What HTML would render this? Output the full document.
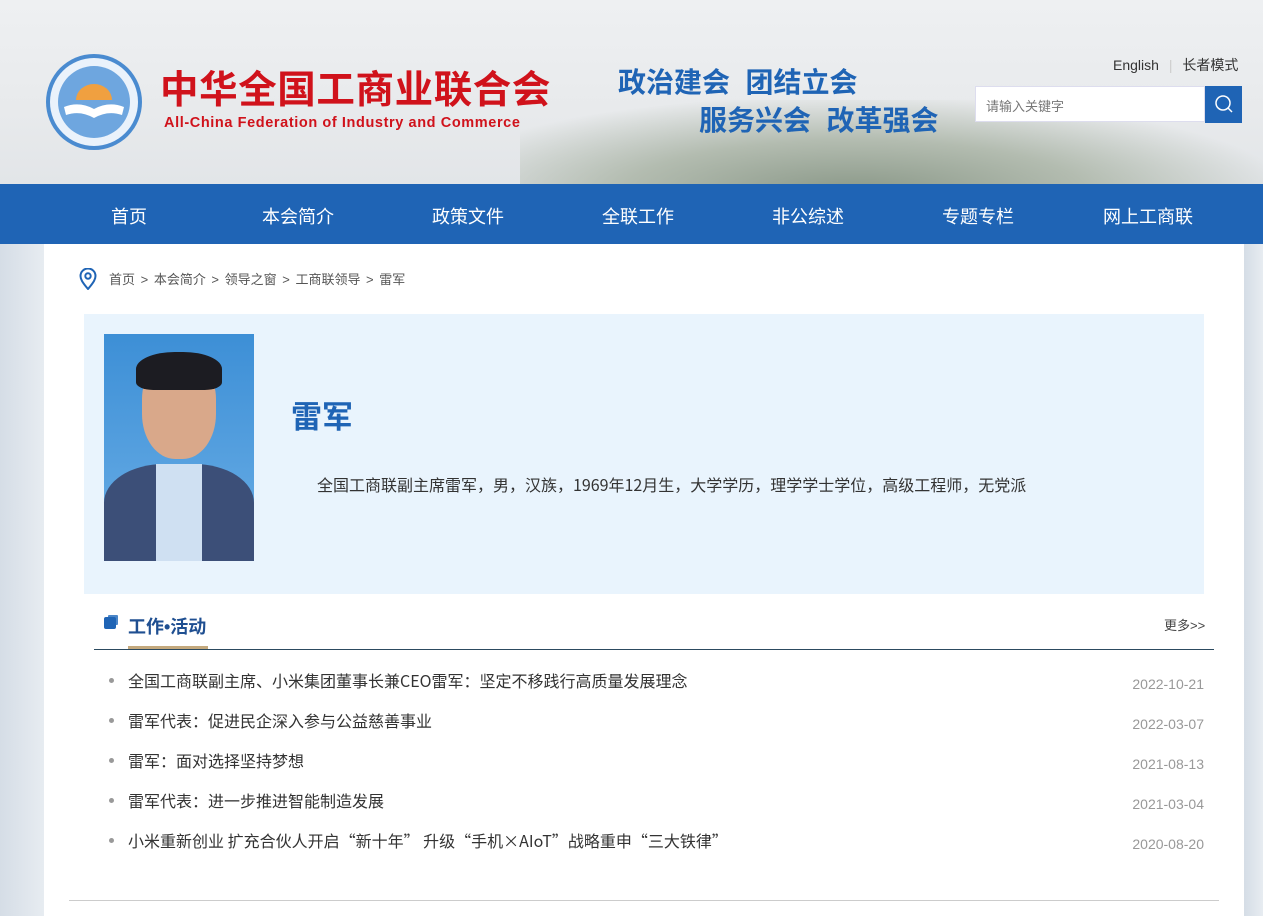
<!DOCTYPE html>
<html><head><meta charset="utf-8"><style>
*{margin:0;padding:0;box-sizing:border-box}
body{width:1263px;height:916px;overflow:hidden;font-family:"Liberation Sans","Noto Sans CJK SC",sans-serif;background:#e3e8ee;position:relative}
.hdr{position:absolute;left:0;top:0;width:1263px;height:184px;background:linear-gradient(180deg,#eef0f2 0%,#e8eaec 60%,#e2e5e8 100%)}
.mtn{position:absolute;left:520px;top:100px;width:743px;height:84px;background:radial-gradient(ellipse at 45% 110%,#8a9888 0%,#b3bcb0 40%,rgba(225,228,230,0) 75%)}
.nav{position:absolute;left:0;top:184px;width:1263px;height:60px;background:#1f64b5}
.nav span{position:absolute;top:19px;color:#fff;font-size:18px}
.main{position:absolute;left:44px;top:244px;width:1200px;height:672px;background:#fff}
.side{position:absolute;top:244px;height:672px;width:44px;background:linear-gradient(90deg,#d5dde6,#e7ecf1)}
.cj{font-family:"Noto Sans CJK SC","Liberation Sans",sans-serif}
.list div{height:40px;position:relative;padding-left:22px}
.list i{position:absolute;left:3px;top:18px;width:5px;height:5px;border-radius:50%;background:#999}
.list b{position:absolute;right:0;top:4px;font-weight:normal;color:#999;font-size:14px;font-family:"Liberation Sans",sans-serif}
</style></head><body>
<div class="hdr"><div class="mtn"></div>
<svg style="position:absolute;left:44px;top:52px" width="100" height="100" viewBox="0 0 100 100"><circle cx="50" cy="50" r="48" fill="#4a8bd0"/><circle cx="50" cy="50" r="44" fill="#eaf2fb"/><circle cx="50" cy="50" r="36" fill="#6ea6df"/><path d="M32 48a18 16 0 0 1 36 0z" fill="#f0a040"/><path d="M20 55q15-6 30 2q15-8 30-2l-2 8q-14-5-28 3q-14-8-28-3z" fill="#fff"/></svg>
<div style="position:absolute;left:160px;top:69px;font-size:38.5px;font-weight:bold;color:#d0121b;line-height:44px;letter-spacing:0.6px">中华全国工商业联合会</div>
<div style="position:absolute;left:164px;top:115px;font-size:14.5px;font-weight:bold;color:#d0121b;letter-spacing:.6px">All-China Federation of Industry and Commerce</div>
<div style="position:absolute;left:618px;top:66px;font-size:28px;font-weight:bold;color:#1f64b5;line-height:34px">政治建会&nbsp;&nbsp;团结立会</div>
<div style="position:absolute;left:699px;top:104px;font-size:28px;font-weight:bold;color:#1f64b5;line-height:34px">服务兴会&nbsp;&nbsp;改革强会</div>
<div style="position:absolute;left:1113px;top:55px;font-size:14px;color:#333">English <span style="color:#ccc;margin:0 6px">|</span> 长者模式</div>
<div style="position:absolute;left:975px;top:86px;width:230px;height:36px;background:#fff;border:1px solid #dde;font-size:13px;color:#777;padding:9px 10px">请输入关键字</div>
<div style="position:absolute;left:1205px;top:86px;width:37px;height:37px;background:#1f64b5"><svg width="37" height="37"><circle cx="18" cy="17" r="7" fill="none" stroke="#fff" stroke-width="1.5"/><path d="M23 22l4 4" stroke="#fff" stroke-width="1.5"/></svg></div>
</div>
<div class="nav"><span style="left:111px">首页</span><span style="left:262px">本会简介</span><span style="left:432px">政策文件</span><span style="left:602px">全联工作</span><span style="left:772px">非公综述</span><span style="left:942px">专题专栏</span><span style="left:1103px">网上工商联</span></div>
<div class="side" style="left:0"></div><div class="side" style="left:1244px;width:19px"></div>
<div class="main">
<svg style="position:absolute;left:35px;top:24px" width="18" height="22" viewBox="0 0 18 22"><path d="M9 21C3 14 1.5 11 1.5 8a7.5 7.5 0 0 1 15 0c0 3-1.5 6-7.5 13z" fill="none" stroke="#1f64b5" stroke-width="2"/><circle cx="9" cy="8" r="2.7" fill="none" stroke="#1f64b5" stroke-width="2"/></svg>
<div style="position:absolute;left:65px;top:25px;font-size:13px;color:#555;word-spacing:2px">首页 &gt; 本会简介 &gt; 领导之窗 &gt; 工商联领导 &gt; 雷军</div>
<div style="position:absolute;left:40px;top:70px;width:1120px;height:280px;background:#e9f4fd"></div>
<div style="position:absolute;left:60px;top:90px;width:150px;height:227px;background:linear-gradient(180deg,#3d8fd6,#6aaee6)">
<div style="position:absolute;left:38px;top:25px;width:74px;height:100px;border-radius:40% 40% 45% 45%;background:#d9a88a"></div>
<div style="position:absolute;left:32px;top:18px;width:86px;height:38px;border-radius:45% 45% 20% 20%;background:#1c1c22"></div>
<div style="position:absolute;left:0;top:130px;width:150px;height:97px;background:#3c4f78;border-radius:40% 40% 0 0"></div>
<div style="position:absolute;left:52px;top:130px;width:46px;height:97px;background:#cfe0f2"></div>
</div>
<div style="position:absolute;left:247px;top:148px;font-size:31px;font-weight:bold;color:#1f64b5">雷军</div>
<div class="cj" style="position:absolute;left:273px;top:228px;font-size:16px;color:#333">全国工商联副主席雷军，男，汉族，1969年12月生，大学学历，理学学士学位，高级工程师，无党派</div>
<div style="position:absolute;left:60px;top:373px;width:12px;height:12px;background:#1f64b5;border-radius:2px;box-shadow:3px -3px 0 -1px #4b86c8"></div>
<div style="position:absolute;left:84px;top:369px;font-size:18px;font-weight:bold;color:#1f4f91">工作•活动</div>
<div style="position:absolute;left:84px;top:402px;width:80px;height:3px;background:#c4a97d"></div>
<div style="position:absolute;left:50px;top:405px;width:1120px;height:1px;background:#2c4a60"></div>
<div style="position:absolute;left:1120px;top:371px;font-size:13px;color:#444">更多&gt;&gt;</div>
<div class="cj list" style="position:absolute;left:62px;top:416px;width:1098px;font-size:16px;color:#333;line-height:40px">
<div><i></i>全国工商联副主席、小米集团董事长兼CEO雷军：坚定不移践行高质量发展理念<b>2022-10-21</b></div>
<div><i></i>雷军代表：促进民企深入参与公益慈善事业<b>2022-03-07</b></div>
<div><i></i>雷军：面对选择坚持梦想<b>2021-08-13</b></div>
<div><i></i>雷军代表：进一步推进智能制造发展<b>2021-03-04</b></div>
<div><i></i>小米重新创业 扩充合伙人开启“新十年” 升级“手机×AIoT”战略重申“三大铁律”<b>2020-08-20</b></div>
</div>
<div style="position:absolute;left:25px;top:656px;width:1150px;height:1px;background:#ccc"></div>
</div>
</body></html>
